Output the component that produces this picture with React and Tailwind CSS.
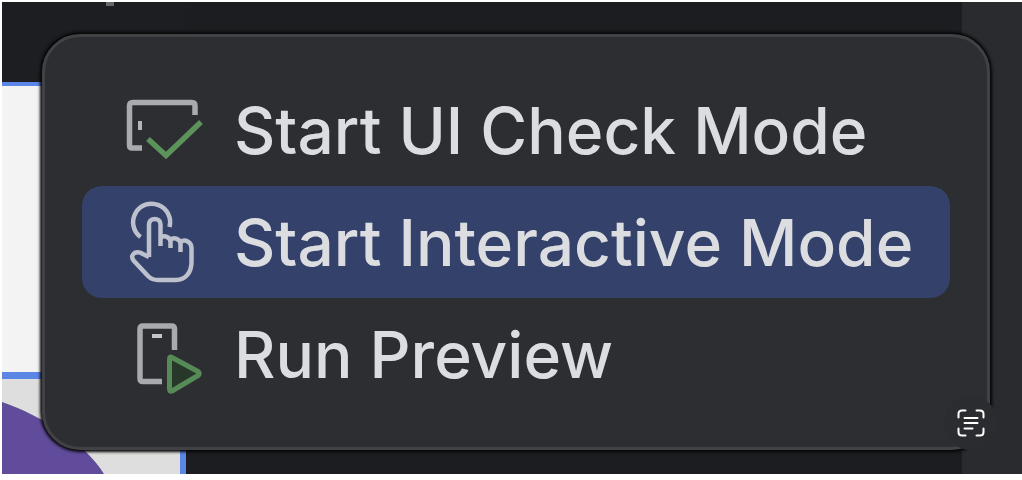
import React from "react";

function UiCheckIcon() {
  return (
    <svg aria-hidden="true" viewBox="0 0 84 84" fill="none" className="size-[84px] shrink-0 overflow-visible">
      <path d="M20 60H10Q7.500 60 7.500 57V18Q7.500 14.500 11 14.500H70Q73 14.500 73 18V27" stroke="#a9aaaf" strokeWidth="5.500" />
      <path d="M18 33V42" stroke="#b4b5b9" strokeWidth="4" />
      <path d="M26 51L44 67.500L79 34" stroke="#5c935b" strokeWidth="5.500" />
    </svg>
  );
}

function InteractiveIcon() {
  return (
    <svg
      aria-hidden="true"
      viewBox="0 0 84 84"
      fill="none"
      stroke="#bdc1cd"
      strokeWidth="4.500"
      strokeLinejoin="round"
      className="size-[84px] shrink-0 overflow-visible"
    >
      <path d="M18.500 37A18.500 18.500 0 1 1 47.500 27" />
      <path d="M27 57V24.500C27 17 38.500 17 38.500 24.500V46" />
      <path d="M38.500 38C42 34.500 48.500 37 48.500 42V48" />
      <path d="M48.500 40C52 36.500 58.500 39 58.500 44V52" />
      <path d="M58.500 42C63 38.500 69.500 42 69.500 48V62C69.500 73 63 80 54 80H36Q30 80 26 76L12 61Q8 56 12.500 53Q16 51 21 54L27 57" />
    </svg>
  );
}

function RunPreviewIcon() {
  return (
    <svg aria-hidden="true" viewBox="0 0 84 84" fill="none" className="size-[84px] shrink-0 overflow-visible">
      <path d="M40 69.500H21Q18 69.500 18 66.500V17Q18 14 21 14H49.500Q52.500 14 52.500 17V38" stroke="#a9aaaf" strokeWidth="5.500" />
      <path d="M30 24H40" stroke="#c4c5c9" strokeWidth="4" />
      <path
        d="M47.500 47Q47.500 44 50 45.500L76 59.500Q78.500 61.500 76 63.500L50 79Q47.500 80 47.500 77Z"
        fill="#27372a"
        stroke="#568a57"
        strokeWidth="5"
        strokeLinejoin="round"
      />
    </svg>
  );
}

const items = [
  { label: "Start UI Check Mode", Icon: UiCheckIcon, active: false },
  { label: "Start Interactive Mode", Icon: InteractiveIcon, active: true },
  { label: "Run Preview", Icon: RunPreviewIcon, active: false },
];

function EditorBackdrop() {
  return (
    <div className="col-start-1 row-start-1 flex overflow-hidden bg-[#1c1d20]">
      <div className="flex w-[184px] shrink-0 flex-col">
        <div className="flex h-20 items-start bg-[#1d1e21] pl-[104px]">
          <span className="h-1 w-2 bg-[#66676a]" />
        </div>
        <div className="flex grow flex-col border-t-4 border-r-[6px] border-[#5b86e5] bg-[#ececec]">
          <div className="h-[286px] shrink-0 bg-linear-to-r from-[#f4f4f4] via-[#efefef] to-[#dcdcdc]" />
          <div className="h-[7px] shrink-0 bg-[#5b86e5]" />
          <svg aria-hidden="true" viewBox="0 0 178 95" className="block w-full grow bg-[#dedede]" preserveAspectRatio="xMinYMin slice">
            <path d="M0 23C40 37 82 63 102 95H0Z" fill="#604c9a" />
          </svg>
        </div>
      </div>
      <div className="grow" />
      <div className="w-[60px] shrink-0 bg-[#2a2b2e]" />
    </div>
  );
}

function PreviewMenu() {
  return (
    <div
      role="menu"
      className="z-10 col-start-1 row-start-1 mt-8 mr-8 mb-6 ml-10 rounded-[38px] border-[3px] border-[#414246] bg-[#2d2e32] p-[37px] shadow-[0_0_3px_2px_#050506]"
    >
      {items.map(({ label, Icon, active }) => (
        <button
          key={label}
          type="button"
          role="menuitem"
          className={
            active
              ? "flex h-28 w-full items-center gap-7 rounded-[20px] bg-[#34426b] pl-10 text-left"
              : "flex h-28 w-full items-center gap-7 rounded-[20px] pl-10 text-left"
          }
        >
          <Icon />
          <span className="pt-[2px] text-[64px] leading-none whitespace-nowrap">{label}</span>
        </button>
      ))}
    </div>
  );
}

function ScanTextButton() {
  return (
    <button
      type="button"
      aria-label="Scan text"
      className="absolute right-6 bottom-6 z-20 flex size-[54px] items-center justify-center rounded-full bg-[#2b2c2f]"
    >
      <svg aria-hidden="true" viewBox="0 0 28 28" fill="none" stroke="#ffffff" strokeWidth="2" strokeLinecap="round" className="size-7">
        <path d="M1.500 8.500V5Q1.500 1.500 5 1.500H8.500M19.500 1.500H23Q26.500 1.500 26.500 5V8.500M26.500 19.500V23Q26.500 26.500 23 26.500H19.500M8.500 26.500H5Q1.500 26.500 1.500 23V19.500" />
        <path d="M7.500 9H20.500M7.500 14H20.500M7.500 19.500H15.500" />
      </svg>
    </button>
  );
}

export default function App() {
  return (
    <div className="bg-white pt-[2px] pl-[2px] font-['Inter',sans-serif] font-medium text-[#dcdde1]">
      <main className="relative grid">
        <EditorBackdrop />
        <PreviewMenu />
        <ScanTextButton />
      </main>
    </div>
  );
}
